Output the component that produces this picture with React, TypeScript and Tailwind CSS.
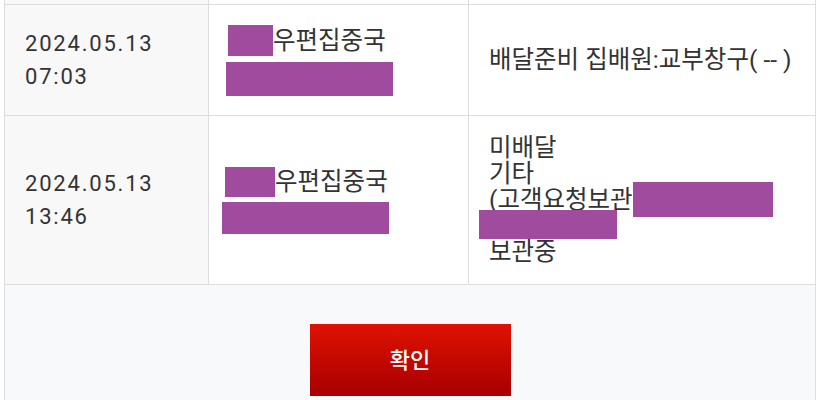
import React from 'react'

const font = { fontFamily: 'Roboto, "Noto Sans CJK KR", sans-serif' }

const redact = 'bg-[#a04b9e]'

// ── Cells ───────────────────────────────────────────────────────────────────

function DateCell({ date, time }: { date: string; time: string }) {
  return (
    <div className="w-[204px] shrink-0 border-r border-[#dddddd] bg-[#f8f8f8] flex items-center pl-[20px]">
      <div className="text-[22px] leading-[33px] tracking-[1.8px] text-[#333333]">
        <div>{date}</div>
        <div>{time}</div>
      </div>
    </div>
  )
}

function OfficeCell({ a, b }: { a: string; b: string }) {
  return (
    <div className="w-[260px] shrink-0 border-r border-[#dddddd] bg-white flex flex-col justify-center pl-[18px]">
      <div className="flex items-center text-[24.5px] text-[#333333]">
        <span className={`${redact} ${a}`} />
        <span className="leading-[31px]">우편집중국</span>
      </div>
      <div className={`${redact} ${b}`} />
    </div>
  )
}

export default function App() {
  return (
    <div className="h-[400px] w-[819px] overflow-hidden bg-white" style={font}>
      <div className="ml-[4px] mr-[3px] h-full border-x border-[#dddddd] flex flex-col">
        {/* tail of the previous row */}
        <div className="flex h-[5px] border-b border-[#dddddd]">
          <div className="w-[204px] border-r border-[#dddddd] bg-[#f8f8f8]" />
          <div className="w-[260px] border-r border-[#dddddd] bg-white" />
          <div className="flex-1 bg-white" />
        </div>

        <div className="flex h-[111px] border-b border-[#dddddd]">
          <DateCell date="2024.05.13" time="07:03" />
          <OfficeCell a="ml-[1px] w-[45px] h-[31px]" b="-ml-[1px] mt-[6px] w-[167px] h-[34px]" />
          <div className="flex-1 bg-white flex items-center pl-[20px] text-[24.5px] text-[#333333]">
            배달준비 집배원:교부창구( -- )
          </div>
        </div>

        <div className="flex h-[169px] border-b border-[#dddddd]">
          <DateCell date="2024.05.13" time="13:46" />
          <OfficeCell a="-ml-[2px] w-[50px] h-[30px]" b="-ml-[5px] mt-[5px] w-[167px] h-[32px]" />
          <div className="flex-1 bg-white flex flex-col justify-center pl-[20px] text-[24.5px] leading-[26px] text-[#333333]">
            <div className="h-[26px]">미배달</div>
            <div className="h-[26px]">기타</div>
            <div className="h-[26px] whitespace-nowrap">
              (고객요청보관
              <span className={`${redact} inline-block align-top w-[140px] h-[35px] -mt-[5px] -mb-[4px]`} />
            </div>
            <div className="h-[26px]">
              <div className={`${redact} w-[138px] h-[29px] -mt-[3px] -ml-[10px]`} />
            </div>
            <div className="h-[26px]">보관중</div>
          </div>
        </div>

        <div className="flex-1 bg-[#f8f9fa] flex justify-center pt-[39px]">
          <button
            type="button"
            className="w-[201px] h-[72px] bg-gradient-to-b from-[#e01200] to-[#a80000] text-white text-[22px] font-medium"
          >
            확인
          </button>
        </div>
      </div>
    </div>
  )
}
